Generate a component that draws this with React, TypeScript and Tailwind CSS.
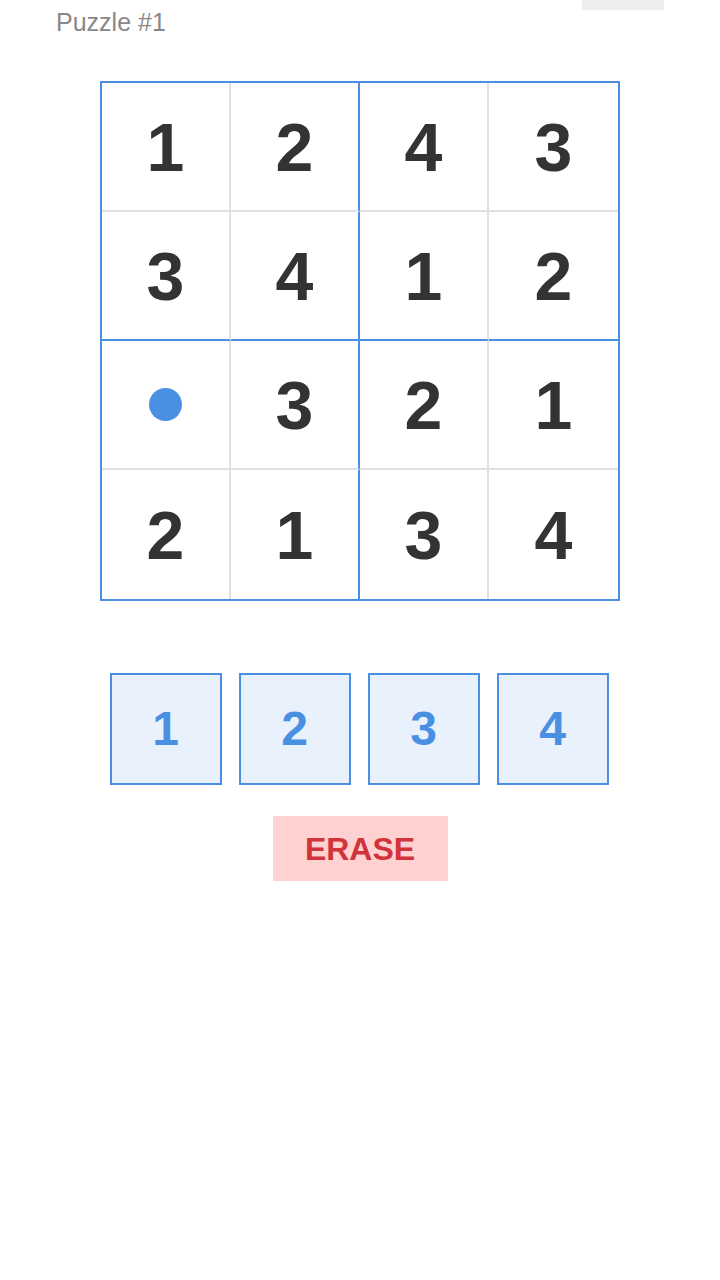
import React from "react";

const board: (number | null)[][] = [
  [1, 2, 4, 3],
  [3, 4, 1, 2],
  [null, 3, 2, 1],
  [2, 1, 3, 4],
];

function cellClass(r: number, c: number) {
  const right =
    c === 3 ? "" : c === 1 ? "border-r-2 border-r-[#4a90e2]" : "border-r-2 border-r-[#e0e0e0]";
  const bottom =
    r === 3 ? "" : r === 1 ? "border-b-2 border-b-[#4a90e2]" : "border-b-2 border-b-[#e0e0e0]";
  return `${right} ${bottom}`;
}

export default function App() {
  return (
    <div
      className="min-h-screen w-[720px] bg-white"
      style={{ fontFamily: '"Liberation Sans", Arial, sans-serif' }}
    >
      {/* Header */}
      <div className="flex items-start justify-between pl-[56px] pr-[56px]">
        <span className="mt-[7px] text-[25px] leading-[30px] text-[#888888]">Puzzle #1</span>
        <div className="h-[10px] w-[82px] bg-[#eeeeee]" />
      </div>

      {/* Board */}
      <div className="mt-[44px] flex justify-center">
        <div className="grid w-[520px] grid-cols-4 border-2 border-[#4a90e2]">
          {board.map((row, r) =>
            row.map((v, c) => (
              <div
                key={`${r}-${c}`}
                className={`flex h-[129px] items-center justify-center ${cellClass(r, c)}`}
              >
                {v === null ? (
                  <span className="h-[33px] w-[33px] rounded-full bg-[#4a90e2]" />
                ) : (
                  <span className="text-[68px] font-bold leading-none text-[#333333]">{v}</span>
                )}
              </div>
            ))
          )}
        </div>
      </div>

      {/* Number pad */}
      <div className="mt-[72px] flex justify-center gap-[17px] pr-[2px]">
        {[1, 2, 3, 4].map((n) => (
          <button
            key={n}
            className="flex h-[112px] w-[112px] items-center justify-center border-2 border-[#4a90e2] bg-[#e8f1fc] text-[48px] font-bold text-[#4a90e2]"
          >
            {n}
          </button>
        ))}
      </div>

      {/* Erase */}
      <div className="mt-[31px] flex justify-center">
        <button className="h-[65px] w-[175px] bg-[#ffd1d1] text-[32px] font-bold text-[#d0343a]">
          ERASE
        </button>
      </div>
    </div>
  );
}
